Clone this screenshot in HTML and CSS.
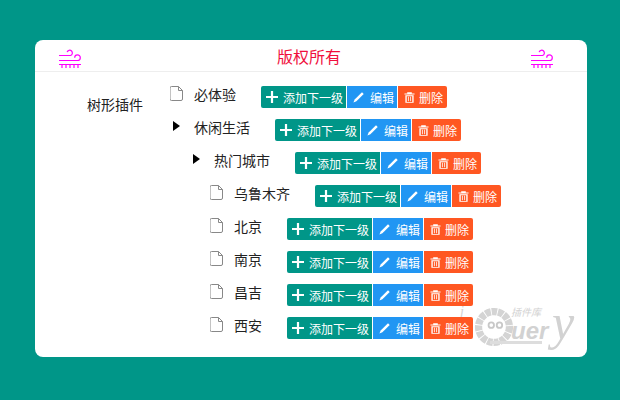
FILE: index.html
```html
<!DOCTYPE html>
<html lang="en">

<head>
  <meta charset="UTF-8">
  <title>树形插件</title>
  <link rel="stylesheet" href="styles.css">
</head>

<body>
  <svg class="defs" width="0" height="0">
    <symbol id="wind" viewBox="0 0 22 19">
      <path d="M0 6.500h11.500a2.700 2.700 0 1 0-3.400-3.400M0 11.500h18.500a2.800 2.800 0 1 0-2.800-2.800M0 15.500h22M3 15.500v3.500M7 15.500v3.500M11 15.500v3.500M15 15.500v3.500M19 15.500v3.500" />
    </symbol>
    <symbol id="file" viewBox="0 0 13 15">
      <path d="M1.500.5h7l4 4v8.500a1.500 1.500 0 0 1-1.500 1.500h-9.500a1.500 1.500 0 0 1-1.500-1.500v-11a1.500 1.500 0 0 1 1.500-1.500zM8.500.5v4h4" />
    </symbol>
    <symbol id="plus" viewBox="0 0 12 12">
      <path d="M4.900 0h2.200v4.900h4.900v2.200h-4.900v4.900h-2.200v-4.900h-4.900v-2.200h4.900z" />
    </symbol>
    <symbol id="pen" viewBox="0 0 12 12">
      <path d="M9.800.3l1.900 1.900-8 8-3.200 1.300 1.300-3.200z" />
    </symbol>
    <symbol id="trash" viewBox="0 0 12 12">
      <path d="M.5 1.500h11v1.300h-11zM3.500.2h5v1.300h-5zM1.500 3.500h9v8.300h-9zM3 4.500v6.300h6v-6.300zM4.300 5.200h.9v5h-.9zM6.800 5.200h.9v5h-.9z" fill-rule="evenodd" />
    </symbol>
  </svg>

  <div class="card">
    <!-- header -->
    <div class="card-head">
      <svg class="wind"><use href="#wind"></use></svg>
      <span class="card-title">版权所有</span>
      <svg class="wind"><use href="#wind"></use></svg>
    </div>
    <!-- tree -->
    <div class="card-body">
      <div class="side-label">树形插件</div>
      <div class="tree">
        <div class="row">
          <svg class="ico-file"><use href="#file"></use></svg>
          <span class="name">必体验</span>
          <div class="btns">
            <span class="btn btn-add"><svg><use href="#plus"></use></svg>添加下一级</span>
            <span class="btn btn-edit"><svg><use href="#pen"></use></svg>编辑</span>
            <span class="btn btn-del"><svg><use href="#trash"></use></svg>删除</span>
          </div>
        </div>
        <div class="row">
          <span class="arrow"></span>
          <span class="name">休闲生活</span>
          <div class="btns">
            <span class="btn btn-add"><svg><use href="#plus"></use></svg>添加下一级</span>
            <span class="btn btn-edit"><svg><use href="#pen"></use></svg>编辑</span>
            <span class="btn btn-del"><svg><use href="#trash"></use></svg>删除</span>
          </div>
        </div>
        <div class="level">
          <div class="row">
            <span class="arrow"></span>
            <span class="name">热门城市</span>
            <div class="btns">
              <span class="btn btn-add"><svg><use href="#plus"></use></svg>添加下一级</span>
              <span class="btn btn-edit"><svg><use href="#pen"></use></svg>编辑</span>
              <span class="btn btn-del"><svg><use href="#trash"></use></svg>删除</span>
            </div>
          </div>
          <div class="level">
            <div class="row">
              <svg class="ico-file"><use href="#file"></use></svg>
              <span class="name">乌鲁木齐</span>
              <div class="btns">
                <span class="btn btn-add"><svg><use href="#plus"></use></svg>添加下一级</span>
                <span class="btn btn-edit"><svg><use href="#pen"></use></svg>编辑</span>
                <span class="btn btn-del"><svg><use href="#trash"></use></svg>删除</span>
              </div>
            </div>
            <div class="row">
              <svg class="ico-file"><use href="#file"></use></svg>
              <span class="name">北京</span>
              <div class="btns">
                <span class="btn btn-add"><svg><use href="#plus"></use></svg>添加下一级</span>
                <span class="btn btn-edit"><svg><use href="#pen"></use></svg>编辑</span>
                <span class="btn btn-del"><svg><use href="#trash"></use></svg>删除</span>
              </div>
            </div>
            <div class="row">
              <svg class="ico-file"><use href="#file"></use></svg>
              <span class="name">南京</span>
              <div class="btns">
                <span class="btn btn-add"><svg><use href="#plus"></use></svg>添加下一级</span>
                <span class="btn btn-edit"><svg><use href="#pen"></use></svg>编辑</span>
                <span class="btn btn-del"><svg><use href="#trash"></use></svg>删除</span>
              </div>
            </div>
            <div class="row">
              <svg class="ico-file"><use href="#file"></use></svg>
              <span class="name">昌吉</span>
              <div class="btns">
                <span class="btn btn-add"><svg><use href="#plus"></use></svg>添加下一级</span>
                <span class="btn btn-edit"><svg><use href="#pen"></use></svg>编辑</span>
                <span class="btn btn-del"><svg><use href="#trash"></use></svg>删除</span>
              </div>
            </div>
            <div class="row">
              <svg class="ico-file"><use href="#file"></use></svg>
              <span class="name">西安</span>
              <div class="btns">
                <span class="btn btn-add"><svg><use href="#plus"></use></svg>添加下一级</span>
                <span class="btn btn-edit"><svg><use href="#pen"></use></svg>编辑</span>
                <span class="btn btn-del"><svg><use href="#trash"></use></svg>删除</span>
              </div>
            </div>
          </div>
        </div>
      </div>
    </div>

    <!-- watermark -->
    <div class="mark">
      <span class="mark-j">j</span>
      <svg class="mark-face" viewBox="0 0 44 44">
        <circle cx="22" cy="22" r="17" fill="none" stroke="#d4d4d4" stroke-width="8" stroke-dasharray="6 1" />
        <circle cx="19" cy="20" r="3" fill="none" stroke="#c8c8c8" stroke-width="2" />
        <circle cx="28" cy="20" r="3" fill="none" stroke="#c8c8c8" stroke-width="2" />
      </svg>
      <span class="mark-lib">插件库</span>
      <span class="mark-word">uer</span>
      <span class="mark-y">y</span>
      <div class="mark-strip"></div>
    </div>
  </div>
</body>

</html>
```
FILE: styles.css
```css
* {
  box-sizing: border-box;
}

body {
  margin: 0;
  height: 400px;
  padding-top: 40px;
  background: #009688;
  font-family: "Liberation Sans", "Noto Sans CJK SC", sans-serif;
  overflow: hidden;
}

.defs {
  position: absolute;
}

/* card start */
.card {
  position: relative;
  width: 552px;
  height: 317px;
  margin-left: 35px;
  background: #fff;
  border-radius: 8px;
}

.card-head {
  display: flex;
  justify-content: space-between;
  align-items: center;
  height: 32px;
  padding: 0 34px 0 24px;
  border-bottom: 1px solid #eee;
}

.card-title {
  margin-left: 6px;
  font-size: 16px;
  color: #f00f3c;
}

.wind {
  width: 22px;
  height: 19px;
  margin-top: 6px;
  fill: none;
  stroke: #f0f;
  stroke-width: 1.200;
}

.card-body {
  display: flex;
  padding-top: 13px;
}

.side-label {
  width: 135px;
  padding: 9px 0 0 52px;
  font-size: 14px;
  color: #222;
}

/* card end */

/* tree start */
.tree {
  position: relative;
  z-index: 1;
}

.row {
  display: flex;
  height: 33px;
  align-items: flex-start;
  font-size: 14px;
  color: #222;
}

.level {
  padding-left: 20px;
}

.ico-file {
  width: 13px;
  height: 15px;
  margin: 1px 11px 0 0;
  fill: none;
  stroke: #888;
  stroke-width: 1;
}

.arrow {
  width: 0;
  height: 0;
  margin: 3px 14px 0 3px;
  border-style: solid;
  border-width: 5.500px 0 5.500px 7px;
  border-color: transparent transparent transparent #000;
}

.name {
  line-height: 20px;
  margin-right: 25px;
}

/* tree end */

/* buttons start */
.btns {
  display: flex;
  gap: 1px;
  margin-top: 1px;
}

.btn {
  display: flex;
  align-items: center;
  height: 22px;
  padding: 0 3px 0 6px;
  font-size: 12px;
  color: #fff;
}

.btn svg {
  fill: #fff;
}

.btn-add {
  width: 85px;
  padding-left: 5px;
  background: #009688;
  border-radius: 2px 0 0 2px;
}

.btn-add svg {
  width: 12px;
  height: 12px;
  margin-right: 5px;
}

.btn-edit {
  width: 50px;
  background: #2196f3;
}

.btn-edit svg {
  width: 11px;
  height: 11px;
  margin-right: 6px;
}

.btn-del {
  width: 49px;
  background: #ff5722;
  border-radius: 0 2px 2px 0;
}

.btn-del svg {
  width: 11px;
  height: 11px;
  margin-right: 4px;
}

/* buttons end */

/* watermark start */
.mark {
  position: absolute;
  left: 413px;
  top: 265px;
  width: 132px;
  height: 48px;
  color: #d2d2d2;
}

.mark-j {
  position: absolute;
  left: 12px;
  top: 1px;
  font-family: "Liberation Serif", serif;
  font-size: 14px;
  line-height: 11px;
  font-style: italic;
}

.mark-face {
  position: absolute;
  left: 26px;
  top: 2px;
  width: 40px;
  height: 40px;
}

.mark-lib {
  position: absolute;
  left: 63px;
  top: 2px;
  font-size: 10px;
  line-height: 11px;
  font-style: italic;
}

.mark-word {
  position: absolute;
  left: 63px;
  top: 14px;
  font-size: 24px;
  line-height: 24px;
  font-weight: bold;
  font-style: italic;
}

.mark-y {
  position: absolute;
  left: 104px;
  top: -8px;
  font-family: "Liberation Serif", serif;
  font-size: 50px;
  line-height: 50px;
  font-style: italic;
}

.mark-strip {
  position: absolute;
  left: 42px;
  top: 36px;
  width: 52px;
  height: 3px;
  background: #ddd;
}

/* watermark end */
```
